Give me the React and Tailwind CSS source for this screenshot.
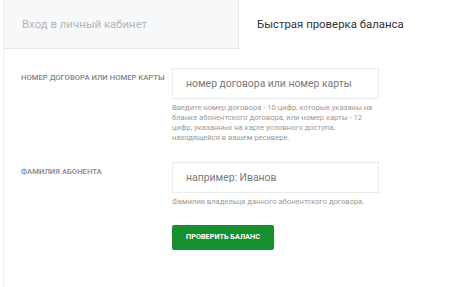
import React from 'react';

// Balance check form with two tabs.
const Field = ({ label, placeholder, help }) => (
    <div className="flex">
        <div className="w-[151px] shrink-0 pt-[4px] text-[7.7px] font-medium uppercase text-[#858585] leading-[11px]">
            {label}
        </div>
        <div className="w-[207px]">
            <input
                type="text"
                placeholder={placeholder}
                className="w-full h-[31px] border border-[#ececec] bg-white px-[13px] text-[10.4px] text-[#555] placeholder:text-[#7a7a7a] outline-none"
            />
            <p className="mt-[4px] text-[7.6px] leading-[10px] text-[#9a9a9a]">{help}</p>
        </div>
    </div>
);

export default function App() {
    return (
        <div className="w-[474px] h-[287px] bg-white overflow-hidden font-['Roboto',sans-serif]">
            <div className="ml-[3px] h-full border-l border-[#eeeff2]">
                {/* Tabs */}
                <div className="flex h-[49px]">
                    <div className="w-[235px] h-full bg-[#f7f8fa] border-r border-b border-[#e6e7ea] flex items-center pl-[18px] pt-[1px] text-[11.4px] text-[#b5b5b5]">
                        Вход в личный кабинет
                    </div>
                    <div className="flex items-center pl-[18px] pt-[1px] text-[11.4px] text-[#333]">
                        Быстрая проверка баланса
                    </div>
                </div>

                {/* Form */}
                <div className="pl-[17px] pt-[19px]">
                    <Field
                        label="Номер договора или номер карты"
                        placeholder="номер договора или номер карты"
                        help="Введите номер договора - 10 цифр, которые указаны на бланке абонентского договора, или номер карты - 12 цифр, указанных на карте условного доступа, находящейся в вашем ресивере."
                    />
                    <div className="mt-[19px]">
                        <Field
                            label="Фамилия абонента"
                            placeholder="например: Иванов"
                            help="Фамилия владельца данного абонентского договора."
                        />
                    </div>
                    <div className="pl-[151px] mt-[15px]">
                        <button className="w-[102px] h-[25px] rounded-[2px] bg-[#16902e] text-white text-[7.3px] font-bold uppercase">
                            Проверить баланс
                        </button>
                    </div>
                </div>
            </div>
        </div>
    );
}
